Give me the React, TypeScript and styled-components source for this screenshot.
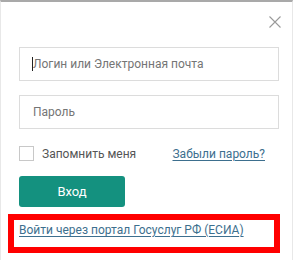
import React from 'react';
import styled, { createGlobalStyle } from 'styled-components';

const GlobalStyles = createGlobalStyle`
  html, body {
    margin: 0;
    padding: 0;
    background: #ffffff;
  }
  body {
    font-family: 'Roboto', 'Liberation Sans', sans-serif;
  }
`;

const Panel = styled.div`
  width: 293px;
  height: 260px;
  box-sizing: border-box;
  border-top: 2px solid #a9a9a9;
  border-left: 1px solid #e8e8e8;
  border-right: 1px solid #e8e8e8;
  padding: 14px 7px 0 7px;
  display: flex;
  flex-direction: column;
  background: #fff;
`;

const CloseRow = styled.div`
  display: flex;
  justify-content: flex-end;
  padding-right: 4px;
  height: 12px;
`;

const CloseButton = styled.button`
  width: 12px;
  height: 12px;
  padding: 0;
  border: 0;
  background: transparent;
  color: #9a9a9a;
  display: flex;
  cursor: pointer;
`;

const Form = styled.div`
  display: flex;
  flex-direction: column;
  padding-left: 11px;
  margin-top: 19px;
`;

const Field = styled.div<{ gap?: number }>`
  position: relative;
  width: 260px;
  margin-top: ${p => p.gap || 0}px;
`;

const Input = styled.input`
  width: 100%;
  height: 34px;
  box-sizing: border-box;
  border: 1px solid #dcdcdc;
  border-radius: 0;
  padding: 0 12px 0 13px;
  font-family: 'Roboto', 'Liberation Sans', sans-serif;
  font-size: 12px;
  color: #333;
  outline: none;

  ::placeholder {
    color: #777;
  }
`;

const Caret = styled.span`
  position: absolute;
  left: 13px;
  top: 10px;
  width: 1px;
  height: 14px;
  background: #222;
`;

const OptionsRow = styled.div`
  display: flex;
  align-items: center;
  margin-top: 17px;
  width: 260px;
`;

const CheckLabel = styled.label`
  display: flex;
  align-items: center;
  gap: 8px;
  font-size: 12px;
  color: #555;
`;

const Box = styled.span`
  width: 15px;
  height: 15px;
  box-sizing: border-box;
  border: 1px solid #c8c8c8;
  background: #fff;
`;

const Link = styled.a`
  font-size: 12px;
  color: #3d6f8e;
  text-decoration: underline;
  text-underline-offset: 2px;
  cursor: pointer;
`;

const ForgotLink = styled(Link)`
  margin-left: auto;
  margin-right: 14px;
`;

const SubmitButton = styled.button`
  margin-top: 15px;
  width: 106px;
  height: 31px;
  border: 0;
  border-radius: 3px;
  background: #14917f;
  color: #fff;
  font-family: 'Roboto', 'Liberation Sans', sans-serif;
  font-size: 13px;
  cursor: pointer;
`;

const Highlight = styled.div`
  margin-top: 7px;
  width: 272px;
  height: 39px;
  box-sizing: border-box;
  border: 6px solid #ff0000;
  padding: 1px 0 0 5px;
  line-height: 15px;
`;

const IconClose = () => (
  <svg width="12" height="12" viewBox="0 0 12 12" fill="none">
    <path d="M0.5 0.5 L11.5 11.5 M11.5 0.5 L0.5 11.5" stroke="currentColor" strokeWidth="1.1" />
  </svg>
);

export default function App() {
  return (
    <>
      <GlobalStyles />
      <Panel>
        <CloseRow>
          <CloseButton aria-label="Закрыть">
            <IconClose />
          </CloseButton>
        </CloseRow>
        <Form>
          <Field>
            <Input placeholder="Логин или Электронная почта" />
            <Caret />
          </Field>
          <Field gap={14}>
            <Input type="password" placeholder="Пароль" />
          </Field>
          <OptionsRow>
            <CheckLabel>
              <Box />
              Запомнить меня
            </CheckLabel>
            <ForgotLink>Забыли пароль?</ForgotLink>
          </OptionsRow>
          <SubmitButton>Вход</SubmitButton>
        </Form>
        <Highlight>
          <Link>Войти через портал Госуслуг РФ (ЕСИА)</Link>
        </Highlight>
      </Panel>
    </>
  );
}
